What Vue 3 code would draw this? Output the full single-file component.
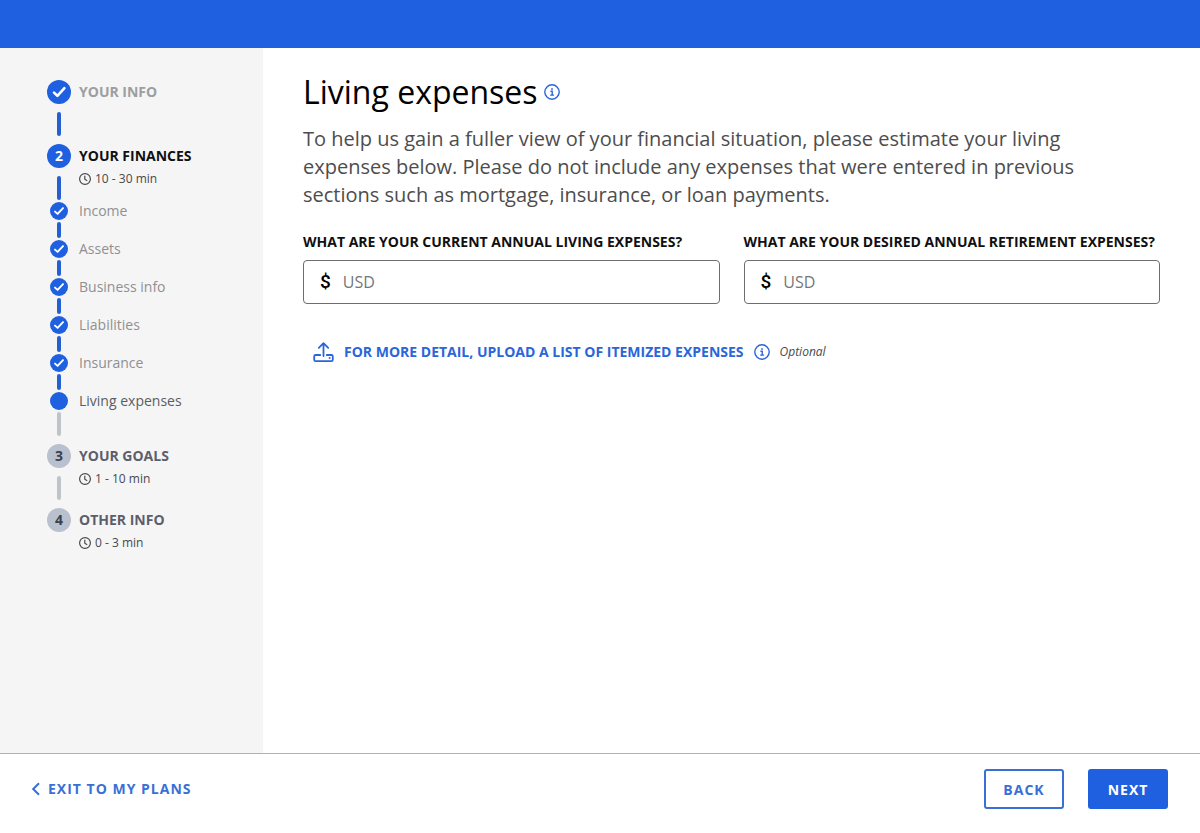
<template>
  <div class="planner">
    <header class="planner__header"></header>

    <div class="planner__body">
      <nav class="sidebar" aria-label="Progress">
        <ol class="steps">
          <template v-for="step in steps" :key="step.label">
            <li class="step" :class="`is-${step.state}`">
              <div class="step__rail">
                <span class="step__marker">
                  <svg v-if="step.state === 'done'" viewBox="0 0 24 24" aria-hidden="true">
                    <path d="M7 12.6l3.4 3.2 7-7.6" />
                  </svg>
                  <template v-else>{{ step.number }}</template>
                </span>
                <span v-if="step.bar" class="step__bar"></span>
              </div>
              <div class="step__text">
                <div class="step__label">{{ step.label }}</div>
                <div v-if="step.time" class="step__time">
                  <svg viewBox="0 0 12 12" aria-hidden="true">
                    <circle cx="6" cy="6" r="5.4" />
                    <path d="M5.8 2.8v3.4l2.4 1.5" />
                  </svg>
                  <span>{{ step.time }}</span>
                </div>
              </div>
            </li>

            <li v-if="step.children" class="step-group">
              <ol class="steps">
                <li
                  v-for="child in step.children"
                  :key="child.label"
                  class="substep"
                  :class="`is-${child.state}`"
                  :aria-current="child.state === 'current' ? 'step' : undefined"
                >
                  <div class="substep__rail">
                    <span class="substep__marker">
                      <svg v-if="child.state === 'done'" viewBox="0 0 18 18" aria-hidden="true">
                        <path d="M5 9.6l2.6 2.3 5.4-5.8" />
                      </svg>
                    </span>
                    <span class="substep__bar"></span>
                  </div>
                  <span class="substep__label">{{ child.label }}</span>
                </li>
              </ol>
            </li>
          </template>
        </ol>
      </nav>

      <main class="content">
        <div class="content__heading">
          <h1 class="content__title">Living expenses</h1>
          <button class="info-btn" type="button" aria-label="About living expenses">
            <svg viewBox="0 0 16 16" aria-hidden="true">
              <circle cx="8" cy="8" r="7.2" />
              <path d="M6.4 7.2h1.8v3.9M6.2 11.1h3.8" />
              <rect x="7.2" y="4.2" width="1.6" height="1.6" />
            </svg>
          </button>
        </div>

        <p class="content__intro">
          To help us gain a fuller view of your financial situation, please estimate your living
          expenses below. Please do not include any expenses that were entered in previous sections
          such as mortgage, insurance, or loan payments.
        </p>

        <form id="expenses-form" class="fields" @submit.prevent>
          <div v-for="field in fields" :key="field.id" class="field">
            <label class="field__label" :for="field.id">{{ field.label }}</label>
            <div class="field__control">
              <span class="field__prefix">$</span>
              <input
                :id="field.id"
                v-model="form[field.id]"
                class="field__input"
                type="text"
                inputmode="numeric"
                placeholder="USD"
                autocomplete="off"
              />
            </div>
          </div>
        </form>

        <div class="upload">
          <button class="upload__btn" type="button">
            <svg viewBox="0 0 21 22" aria-hidden="true">
              <path d="M10.5 15V2.4M5.8 6.8l4.7-4.7 4.7 4.7" />
              <path d="M7.2 14H2.6a1.4 1.4 0 0 0-1.4 1.4v3.4a1.4 1.4 0 0 0 1.4 1.4h15.8a1.4 1.4 0 0 0 1.4-1.4v-3.4a1.4 1.4 0 0 0-1.4-1.4h-4.6" />
              <circle class="upload__dot" cx="16.6" cy="17.1" r="1" />
            </svg>
            <span>FOR MORE DETAIL, UPLOAD A LIST OF ITEMIZED EXPENSES</span>
          </button>
          <button class="info-btn" type="button" aria-label="About itemized expenses">
            <svg viewBox="0 0 16 16" aria-hidden="true">
              <circle cx="8" cy="8" r="7.2" />
              <path d="M6.4 7.2h1.8v3.9M6.2 11.1h3.8" />
              <rect x="7.2" y="4.2" width="1.6" height="1.6" />
            </svg>
          </button>
          <span class="upload__optional">Optional</span>
        </div>
      </main>
    </div>

    <footer class="planner__footer">
      <a class="exit-link" href="#">
        <svg viewBox="0 0 8 14" aria-hidden="true">
          <path d="M7 1.2L1.2 7 7 12.8" />
        </svg>
        <span>EXIT TO MY PLANS</span>
      </a>
      <div class="planner__actions">
        <button class="btn btn--outline" type="button">BACK</button>
        <button class="btn btn--primary" type="submit" form="expenses-form">NEXT</button>
      </div>
    </footer>
  </div>
</template>

<script setup>
import { reactive } from 'vue'

const steps = [
  { number: 1, label: 'YOUR INFO', state: 'done', bar: true },
  {
    number: 2,
    label: 'YOUR FINANCES',
    time: '10 - 30 min',
    state: 'active',
    bar: true,
    children: [
      { label: 'Income', state: 'done' },
      { label: 'Assets', state: 'done' },
      { label: 'Business info', state: 'done' },
      { label: 'Liabilities', state: 'done' },
      { label: 'Insurance', state: 'done' },
      { label: 'Living expenses', state: 'current' },
    ],
  },
  { number: 3, label: 'YOUR GOALS', time: '1 - 10 min', state: 'todo', bar: true },
  { number: 4, label: 'OTHER INFO', time: '0 - 3 min', state: 'todo', bar: false },
]

const fields = [
  { id: 'living', label: 'WHAT ARE YOUR CURRENT ANNUAL LIVING EXPENSES?' },
  { id: 'retirement', label: 'WHAT ARE YOUR DESIRED ANNUAL RETIREMENT EXPENSES?' },
]

const form = reactive({
  living: '',
  retirement: '',
})
</script>

<style>
body {
  margin: 0;
  background: #fff;
}
</style>

<style scoped>
.planner {
  min-height: 100vh;
  display: flex;
  flex-direction: column;
  color: #101010;
  font-family: 'Open Sans', 'Noto Sans', sans-serif;
  font-size: 14px;
  line-height: 20px;
}

.planner *,
.planner {
  box-sizing: border-box;
}

.planner svg {
  display: block;
  flex-shrink: 0;
  fill: none;
  stroke: currentColor;
}

.planner button,
.planner input {
  font-family: inherit;
}

.planner button {
  cursor: pointer;
}

.planner__header {
  height: 48px;
  background: #1f60e0;
}

.planner__body {
  flex: 1;
  display: flex;
}

/* Sidebar */
.sidebar {
  width: 263px;
  flex-shrink: 0;
  padding: 32px 24px 32px 47px;
  background: #f5f5f5;
}

.steps {
  margin: 0;
  padding: 0;
  list-style: none;
}

.step,
.substep {
  display: flex;
  gap: 8px;
}

.step__rail,
.substep__rail {
  width: 24px;
  flex-shrink: 0;
  display: flex;
  flex-direction: column;
  align-items: center;
}

.step__marker {
  width: 24px;
  height: 24px;
  display: flex;
  align-items: center;
  justify-content: center;
  border-radius: 50%;
  background: #1f60e0;
  color: #fff;
  font-weight: 700;
}

.step__marker svg {
  width: 24px;
  height: 24px;
  stroke-width: 2.6;
  stroke-linecap: round;
  stroke-linejoin: round;
}

.step__bar {
  width: 4px;
  height: 24px;
  margin: 8px 0;
  border-radius: 2px;
  background: #2560d3;
}

.step.is-active .step__bar {
  margin-bottom: 2px;
}

.step__label {
  line-height: 24px;
  font-weight: 700;
}

.step.is-done .step__label {
  color: #9c9ea0;
}

.step.is-todo .step__label {
  color: #5d5e6b;
}

.step.is-todo .step__marker {
  background: #b9c1ce;
  color: #3a4250;
}

.step.is-todo .step__bar {
  background: #bfc4ca;
}

.step__time {
  display: flex;
  align-items: center;
  gap: 4px;
  color: #48494b;
  font-size: 12px;
  line-height: 22px;
}

.step__time svg {
  width: 12px;
  height: 12px;
  stroke-width: 1.2;
}

.substep__marker {
  width: 18px;
  height: 18px;
  border-radius: 50%;
  background: #1f60e0;
  color: #fff;
}

.substep__marker svg {
  width: 18px;
  height: 18px;
  stroke-width: 1.9;
  stroke-linecap: round;
  stroke-linejoin: round;
}

.substep__bar {
  width: 4px;
  height: 16px;
  margin: 2px 0;
  border-radius: 2px;
  background: #2560d3;
}

.substep__label {
  color: #8f9092;
  line-height: 18px;
}

.substep.is-current .substep__label {
  color: #5a5d63;
}

.substep.is-current .substep__bar {
  height: 24px;
  margin-bottom: 8px;
  background: #bfc4ca;
}

/* Content */
.content {
  min-width: 0;
  flex: 1;
  padding: 24px 40px;
}

.content__heading {
  display: flex;
  align-items: center;
  gap: 6px;
}

.content__title {
  margin: 0;
  color: #000;
  font-size: 32px;
  font-weight: 400;
  line-height: 40px;
}

.content__intro {
  max-width: 800px;
  margin: 13px 0 23px;
  color: #4d4d4d;
  font-size: 20px;
  line-height: 28px;
}

.info-btn {
  width: 16px;
  height: 16px;
  padding: 0;
  border: none;
  background: transparent;
  color: #2a66d9;
}

.info-btn svg {
  width: 16px;
  height: 16px;
  stroke-width: 1.4;
}

.info-btn rect {
  fill: currentColor;
  stroke: none;
}

.fields {
  display: grid;
  grid-template-columns: 1fr 1fr;
  gap: 24px;
}

.field__label {
  display: block;
  margin-bottom: 8px;
  font-weight: 700;
  white-space: nowrap;
}

.field__control {
  height: 44px;
  display: flex;
  align-items: center;
  gap: 12px;
  padding: 0 16px;
  border: 1px solid #6b6d70;
  border-radius: 4px;
  background: #fff;
}

.field__control:focus-within {
  border-color: #1f60e0;
}

.field__prefix {
  color: #000;
  font-family: Roboto, sans-serif;
  font-size: 19px;
  font-weight: 500;
}

.field__input {
  min-width: 0;
  flex: 1;
  padding: 0;
  border: none;
  outline: none;
  background: transparent;
  color: #101010;
  font-size: 16px;
  line-height: 24px;
}

.field__input::placeholder {
  color: #74777b;
  opacity: 1;
}

.upload {
  display: flex;
  align-items: center;
  gap: 10px;
  margin-top: 36px;
  padding-left: 10px;
}

.upload__btn {
  display: flex;
  align-items: center;
  gap: 10px;
  padding: 0;
  border: none;
  background: transparent;
  color: #2a66d9;
  font-size: 14px;
  font-weight: 700;
  line-height: 24px;
}

.upload__btn svg {
  width: 21px;
  height: 22px;
  stroke-width: 1.8;
  stroke-linecap: round;
  stroke-linejoin: round;
}

.upload__btn .upload__dot {
  fill: currentColor;
  stroke: none;
}

.upload__optional {
  color: #48494b;
  font-size: 12px;
  font-style: italic;
}

/* Footer */
.planner__footer {
  display: flex;
  align-items: center;
  justify-content: space-between;
  padding: 15px 32px 24px;
  border-top: 1px solid #b0b1b3;
}

.exit-link {
  display: flex;
  align-items: center;
  gap: 8px;
  color: #3a70d6;
  font-weight: 700;
  letter-spacing: 1px;
  text-decoration: none;
}

.exit-link svg {
  width: 8px;
  height: 14px;
  stroke-width: 2;
}

.planner__actions {
  display: flex;
  gap: 24px;
}

.btn {
  min-width: 80px;
  height: 40px;
  padding: 0 16px;
  border: 2px solid #1f60e0;
  border-radius: 3px;
  font-size: 14px;
  font-weight: 700;
  letter-spacing: 1px;
}

.btn--outline {
  border-color: #3a70d6;
  background: #fff;
  color: #3a70d6;
}

.btn--primary {
  background: #1f60e0;
  color: #fff;
}
</style>
